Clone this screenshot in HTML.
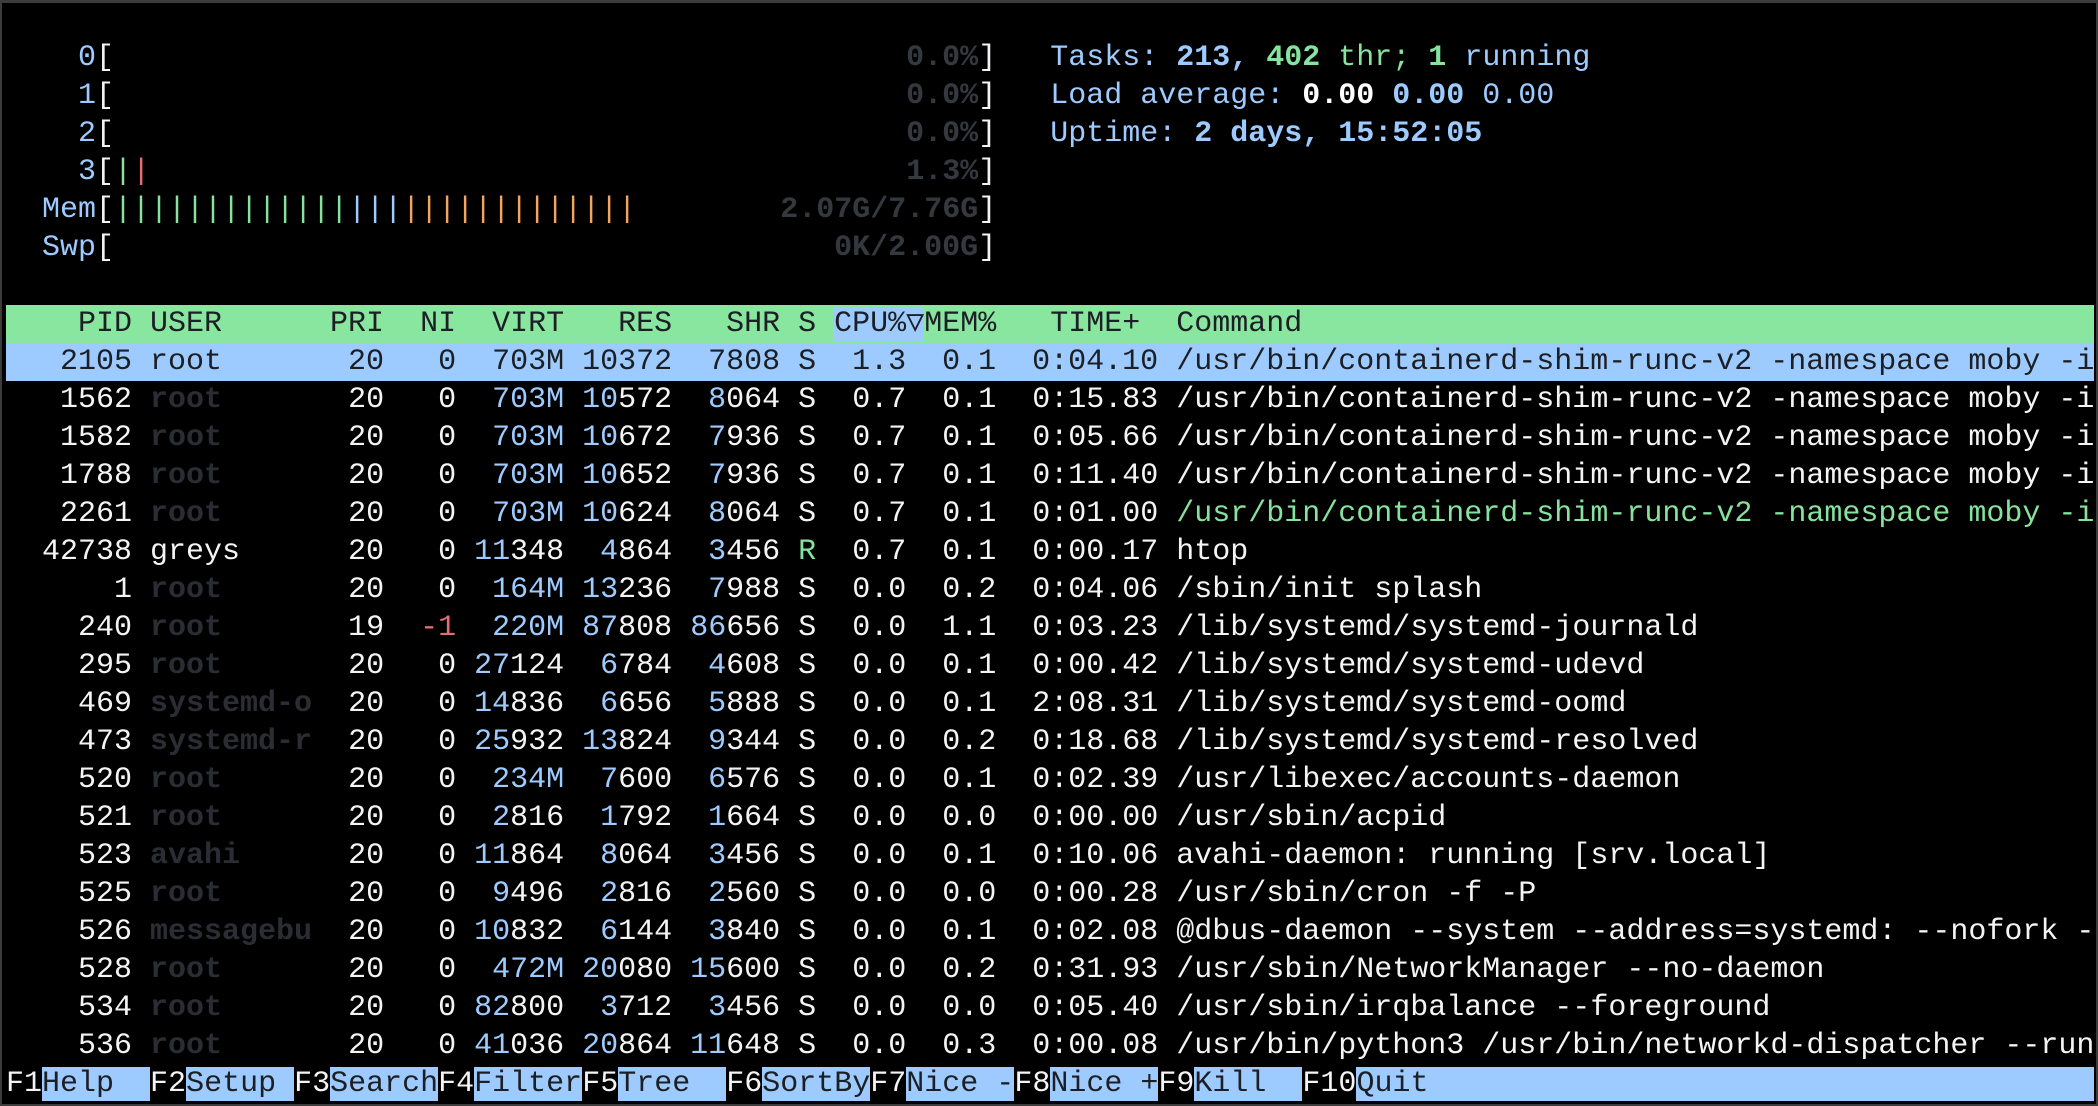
<!DOCTYPE html>
<html><head><meta charset="utf-8"><style>
html,body{margin:0;padding:0;background:#000;}
#s{position:relative;width:2098px;height:1106px;background:#000;box-sizing:border-box;border:2px solid #3c3c3c;border-top-width:3px;overflow:hidden;}
#t{position:absolute;left:4px;top:36px;width:2088px;font-family:"Liberation Mono","DejaVu Sans Mono",monospace;font-size:30px;color:#f4f4f4;}
.l{height:38px;line-height:38px;white-space:pre;overflow:hidden;}
.b{color:#9ecbff}.g{color:#86e39e}.d{color:#2a2e34;font-weight:bold}.r{color:#e96b74}.o{color:#f3a463}.p{color:#343940;font-weight:bold}
.B{font-weight:bold}.W{color:#fff;font-weight:bold}
.hd{background:#88e69f;color:#1c1f24}.hs{background:#9ecbff;color:#1c1f24}
.k{background:#9ecbff;color:#1c1f24}
</style></head><body><div id="s"><div id="t">
<div class="l">    <span class="b">0</span>[                                            <span class="p">0.0%</span>]   <span class="b">Tasks: </span><span class="b B">213, </span><span class="g B">402</span><span class="g"> thr; </span><span class="g B">1</span><span class="b"> running</span></div>
<div class="l">    <span class="b">1</span>[                                            <span class="p">0.0%</span>]   <span class="b">Load average: </span><span class="W">0.00 </span><span class="b B">0.00 </span><span class="b">0.00</span></div>
<div class="l">    <span class="b">2</span>[                                            <span class="p">0.0%</span>]   <span class="b">Uptime: </span><span class="b B">2 days, 15:52:05</span></div>
<div class="l">    <span class="b">3</span>[<span class="g">|</span><span class="r">|</span>                                          <span class="p">1.3%</span>]</div>
<div class="l">  <span class="b">Mem</span>[<span class="g">|||||||||||||</span><span class="b">|||</span><span class="o">|||||||||||||</span>        <span class="p">2.07G/7.76G</span>]</div>
<div class="l">  <span class="b">Swp</span>[                                        <span class="p">0K/2.00G</span>]</div>
<div class="l"> </div>
<div class="l hd">    PID USER      PRI  NI  VIRT   RES   SHR S <span class="hs">CPU%▽</span>MEM%   TIME+  Command                                                    </div>
<div class="l hs">   2105 root       20   0  703M 10372  7808 S  1.3  0.1  0:04.10 /usr/bin/containerd-shim-runc-v2 -namespace moby -i</div>
<div class="l">   1562 <span class="d">root</span>       20   0  <span class="b">703M</span> <span class="b">10</span>572  <span class="b">8</span>064 S  0.7  0.1  0:15.83 /usr/bin/containerd-shim-runc-v2 -namespace moby -i</div>
<div class="l">   1582 <span class="d">root</span>       20   0  <span class="b">703M</span> <span class="b">10</span>672  <span class="b">7</span>936 S  0.7  0.1  0:05.66 /usr/bin/containerd-shim-runc-v2 -namespace moby -i</div>
<div class="l">   1788 <span class="d">root</span>       20   0  <span class="b">703M</span> <span class="b">10</span>652  <span class="b">7</span>936 S  0.7  0.1  0:11.40 /usr/bin/containerd-shim-runc-v2 -namespace moby -i</div>
<div class="l">   2261 <span class="d">root</span>       20   0  <span class="b">703M</span> <span class="b">10</span>624  <span class="b">8</span>064 S  0.7  0.1  0:01.00 <span class="g">/usr/bin/containerd-shim-runc-v2 -namespace moby -i</span></div>
<div class="l">  42738 greys      20   0 <span class="b">11</span>348  <span class="b">4</span>864  <span class="b">3</span>456 <span class="g">R</span>  0.7  0.1  0:00.17 htop</div>
<div class="l">      1 <span class="d">root</span>       20   0  <span class="b">164M</span> <span class="b">13</span>236  <span class="b">7</span>988 S  0.0  0.2  0:04.06 /sbin/init splash</div>
<div class="l">    240 <span class="d">root</span>       19  <span class="r">-1</span>  <span class="b">220M</span> <span class="b">87</span>808 <span class="b">86</span>656 S  0.0  1.1  0:03.23 /lib/systemd/systemd-journald</div>
<div class="l">    295 <span class="d">root</span>       20   0 <span class="b">27</span>124  <span class="b">6</span>784  <span class="b">4</span>608 S  0.0  0.1  0:00.42 /lib/systemd/systemd-udevd</div>
<div class="l">    469 <span class="d">systemd-o</span>  20   0 <span class="b">14</span>836  <span class="b">6</span>656  <span class="b">5</span>888 S  0.0  0.1  2:08.31 /lib/systemd/systemd-oomd</div>
<div class="l">    473 <span class="d">systemd-r</span>  20   0 <span class="b">25</span>932 <span class="b">13</span>824  <span class="b">9</span>344 S  0.0  0.2  0:18.68 /lib/systemd/systemd-resolved</div>
<div class="l">    520 <span class="d">root</span>       20   0  <span class="b">234M</span>  <span class="b">7</span>600  <span class="b">6</span>576 S  0.0  0.1  0:02.39 /usr/libexec/accounts-daemon</div>
<div class="l">    521 <span class="d">root</span>       20   0  <span class="b">2</span>816  <span class="b">1</span>792  <span class="b">1</span>664 S  0.0  0.0  0:00.00 /usr/sbin/acpid</div>
<div class="l">    523 <span class="d">avahi</span>      20   0 <span class="b">11</span>864  <span class="b">8</span>064  <span class="b">3</span>456 S  0.0  0.1  0:10.06 avahi-daemon: running [srv.local]</div>
<div class="l">    525 <span class="d">root</span>       20   0  <span class="b">9</span>496  <span class="b">2</span>816  <span class="b">2</span>560 S  0.0  0.0  0:00.28 /usr/sbin/cron -f -P</div>
<div class="l">    526 <span class="d">messagebu</span>  20   0 <span class="b">10</span>832  <span class="b">6</span>144  <span class="b">3</span>840 S  0.0  0.1  0:02.08 @dbus-daemon --system --address=systemd: --nofork -</div>
<div class="l">    528 <span class="d">root</span>       20   0  <span class="b">472M</span> <span class="b">20</span>080 <span class="b">15</span>600 S  0.0  0.2  0:31.93 /usr/sbin/NetworkManager --no-daemon</div>
<div class="l">    534 <span class="d">root</span>       20   0 <span class="b">82</span>800  <span class="b">3</span>712  <span class="b">3</span>456 S  0.0  0.0  0:05.40 /usr/sbin/irqbalance --foreground</div>
<div class="l">    536 <span class="d">root</span>       20   0 <span class="b">41</span>036 <span class="b">20</span>864 <span class="b">11</span>648 S  0.0  0.3  0:00.08 /usr/bin/python3 /usr/bin/networkd-dispatcher --run</div>
<div class="l">F1<span class="k">Help  </span>F2<span class="k">Setup </span>F3<span class="k">Search</span>F4<span class="k">Filter</span>F5<span class="k">Tree  </span>F6<span class="k">SortBy</span>F7<span class="k">Nice -</span>F8<span class="k">Nice +</span>F9<span class="k">Kill  </span>F10<span class="k">Quit                                         </span></div>
</div></div></body></html>
